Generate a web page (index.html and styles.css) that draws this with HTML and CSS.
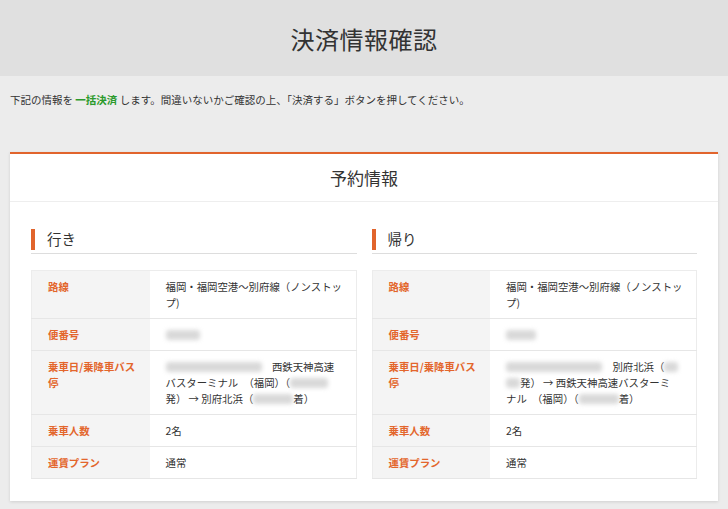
FILE: index.html
```html
<!DOCTYPE html>
<html lang="ja">
<head>
<meta charset="utf-8">
<title>決済情報確認</title>
<link rel="stylesheet" href="styles.css">
</head>
<body>
<header class="page-header">
  <h1 class="page-title">決済情報確認</h1>
</header>
<p class="intro">下記の情報を <span class="em">一括決済</span> します。間違いないかご確認の上、「決済する」ボタンを押してください。</p>
<section class="card">
  <h2 class="card-title">予約情報</h2>
  <div class="card-body">
    <div class="trip">
      <h3 class="trip-title">行き</h3>
      <table class="info">
        <tr><th>路線</th><td>福岡・福岡空港～別府線（ノンストップ)</td></tr>
        <tr><th>便番号</th><td><span class="blur w34"></span></td></tr>
        <tr><th>乗車日/乗降車バス停</th><td><span class="blur w96"></span>　西鉄天神高速<br>バスターミナル　（福岡）（<span class="blur w38"></span><br>発） → 別府北浜（<span class="blur w40"></span>着）</td></tr>
        <tr><th>乗車人数</th><td>2名</td></tr>
        <tr><th>運賃プラン</th><td>通常</td></tr>
      </table>
    </div>
    <div class="trip">
      <h3 class="trip-title">帰り</h3>
      <table class="info">
        <tr><th>路線</th><td>福岡・福岡空港～別府線（ノンストップ)</td></tr>
        <tr><th>便番号</th><td><span class="blur w30"></span></td></tr>
        <tr><th>乗車日/乗降車バス停</th><td><span class="blur w96"></span>　別府北浜（<span class="blur w14"></span><br><span class="blur w14"></span>発） → 西鉄天神高速バスターミ<br>ナル　（福岡）（<span class="blur w40"></span>着）</td></tr>
        <tr><th>乗車人数</th><td>2名</td></tr>
        <tr><th>運賃プラン</th><td>通常</td></tr>
      </table>
    </div>
  </div>
</section>
</body>
</html>
```
FILE: styles.css
```css
* { box-sizing: border-box; }
html, body { margin: 0; padding: 0; }
body {
  background: #ececec;
  color: #333;
  font-family: "Noto Sans CJK JP", "Noto Sans", sans-serif;
  height: 509px;
  overflow: hidden;
}
.page-header {
  background: #e0e0e0;
  height: 76px;
  display: flex;
  align-items: center;
  justify-content: center;
}
.page-title {
  margin: 0;
  font-size: 24px;
  font-weight: 400;
  color: #333;
  letter-spacing: 0.5px;
}
.intro {
  margin: 0;
  padding: 16px 10px 0;
  font-size: 10.5px;
  line-height: 16px;
  height: 76px;
}
.intro .em { color: #2b9a2b; font-weight: 700; }
.card {
  margin: 0 10px;
  background: #fff;
  border-top: 2px solid #e1642c;
  box-shadow: 0 1px 3px rgba(0,0,0,0.12);
  padding-bottom: 22px;
}
.card-title {
  margin: 0;
  height: 48px;
  line-height: 48px;
  text-align: center;
  font-size: 17px;
  font-weight: 400;
  border-bottom: 1px solid #eee;
}
.card-body {
  display: flex;
  gap: 15px;
  padding: 0 21px;
}
.trip { flex: 1; min-width: 0; }
.trip-title {
  margin: 26px 0 16px;
  padding: 0 0 3px 0;
  font-size: 14.5px;
  font-weight: 400;
  line-height: 22px;
  border-bottom: 1px solid #ddd;
  display: flex;
  align-items: center;
  gap: 12px;
}
.trip-title::before {
  content: "";
  width: 4px;
  height: 21px;
  background: #e1642c;
}
.info {
  width: 100%;
  border-collapse: collapse;
  border: 1px solid #ececec;
  font-size: 10.4px;
  line-height: 16px;
}
.info th, .info td {
  border-bottom: 1px solid #e6e6e6;
  padding: 8px 12px 7px 16px;
  text-align: left;
  vertical-align: top;
}
.info th {
  width: 118px;
  background: #f4f4f4;
  color: #e3662c;
  font-weight: 700;
}
.info td { background: #fff; }
.blur {
  display: inline-block;
  height: 10px;
  vertical-align: -1px;
  background: #d9d9d9;
  filter: blur(2px);
  border-radius: 3px;
}
.w14 { width: 14px; }
.w30 { width: 30px; }
.w34 { width: 34px; }
.w38 { width: 38px; }
.w40 { width: 40px; }
.w96 { width: 96px; }
```
